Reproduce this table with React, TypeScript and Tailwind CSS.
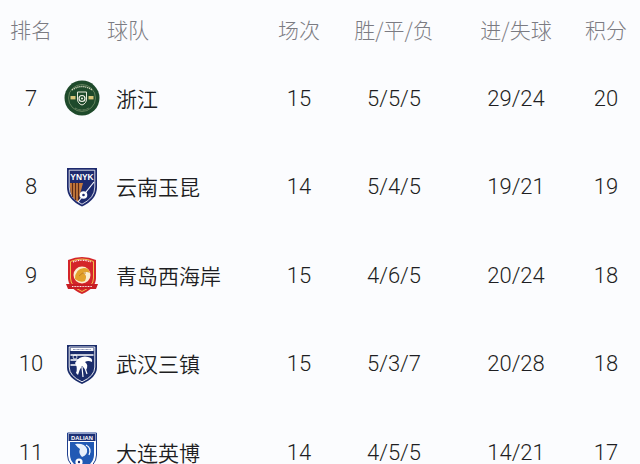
import React from "react";

const font = { fontFamily: '"Noto Sans CJK SC", "Noto Sans", sans-serif' };
const digitFont = { fontFamily: 'Roboto, "Noto Sans CJK SC", sans-serif' };

function ZhejiangLogo() {
  return (
    <svg width="36" height="36" viewBox="0 0 36 36">
      <circle cx="18" cy="18" r="17.5" fill="#1e4a2b" />
      <circle cx="18" cy="18" r="13.5" fill="none" stroke="#8fa57a" strokeWidth="0.6" />
      <path d="M8 10 Q18 3 28 10" fill="none" stroke="#d9dcc0" strokeWidth="1.4" strokeDasharray="1.2 0.8" />
      <path d="M11 28 Q18 32 25 28" fill="none" stroke="#a9b592" strokeWidth="0.8" strokeDasharray="0.8 0.6" />
      <rect x="6.5" y="16" width="5" height="3.4" fill="#d8c57a" />
      <rect x="24.5" y="16" width="5" height="3.4" fill="#d8c57a" />
      <path d="M13.5 12 H22.5 V19 Q22.5 23.5 18 25 Q13.5 23.5 13.5 19 Z" fill="none" stroke="#e8eadb" strokeWidth="1" />
      <circle cx="18" cy="18.5" r="3" fill="none" stroke="#f2f2e8" strokeWidth="1.2" />
      <circle cx="18" cy="18.5" r="1" fill="#f2f2e8" />
    </svg>
  );
}

function YunnanLogo() {
  return (
    <svg width="32" height="40" viewBox="0 0 32 40">
      <path d="M1 1 H31 V20 Q31 32.5 16 39.5 Q1 32.5 1 20 Z" fill="#1d2a6e" />
      <path d="M3.2 3.2 H28.8 V20 Q28.8 31 16 37.2 Q3.2 31 3.2 20 Z" fill="none" stroke="#ffffff" strokeWidth="0.8" />
      <text x="16" y="13" textAnchor="middle" fontSize="8.4" fontWeight="bold" fill="#ffffff" fontFamily="Liberation Sans, sans-serif">YNYK</text>
      <path d="M4 16 H17 L12 35 Q4 30 4 20 Z" fill="#c67a3e" />
      <path d="M6.5 16 V30" stroke="#5a2a1a" strokeWidth="1.2" />
      <path d="M9.5 16 V33" stroke="#5a2a1a" strokeWidth="1.2" />
      <path d="M12.5 16 V33" stroke="#5a2a1a" strokeWidth="1.2" />
      <path d="M28 15 L12 35" stroke="#ffffff" strokeWidth="1.2" />
      <circle cx="17.5" cy="28" r="3.8" fill="#ffffff" />
      <circle cx="17.5" cy="28" r="1.3" fill="#1d2a6e" />
    </svg>
  );
}

function QingdaoLogo() {
  return (
    <svg width="34" height="42" viewBox="0 0 34 42">
      <path d="M3 6 Q17 0 31 6 V24 Q31 34 17 40 Q3 34 3 24 Z" fill="#d4252a" />
      <path d="M5.5 7.5 Q17 2.5 28.5 7.5 V24 Q28.5 32.5 17 37.5 Q5.5 32.5 5.5 24 Z" fill="none" stroke="#f2c14b" strokeWidth="1" />
      <path d="M8 8 Q17 4.5 26 8" fill="none" stroke="#ffffff" strokeWidth="1.2" strokeDasharray="1 0.7" />
      <circle cx="17" cy="21" r="8.5" fill="#fbeed0" />
      <path d="M10 25 Q10 15 19 14 Q24 14 25 19 Q21 17 18 19 Q23 21 20 27 Q15 29 10 25 Z" fill="#e3a22c" />
      <path d="M14 22 Q17 18 21 19" fill="none" stroke="#b8741a" strokeWidth="0.8" />
      <path d="M1 30 H33 L31 35 H3 Z" fill="#c81e24" />
      <path d="M7 32.5 H27" stroke="#ffffff" strokeWidth="0.9" strokeDasharray="1 0.6" />
    </svg>
  );
}

function WuhanLogo() {
  return (
    <svg width="32" height="42" viewBox="0 0 32 42">
      <path d="M1 2 H31 V24 Q31 34.5 16 41 Q1 34.5 1 24 Z" fill="#1b2d6b" />
      <path d="M3.2 4 H28.8 V24 Q28.8 33 16 38.8 Q3.2 33 3.2 24 Z" fill="none" stroke="#ffffff" strokeWidth="0.9" />
      <rect x="4.5" y="5" width="23" height="3" fill="#ffffff" />
      <path d="M7 6.5 H25" stroke="#1b2d6b" strokeWidth="0.6" strokeDasharray="0.8 0.5" />
      <path d="M4.5 12 H27.5 M4.5 17 H14 M4.5 22 H11" stroke="#ffffff" strokeWidth="1.6" />
      <circle cx="9" cy="14" r="2" fill="none" stroke="#ffffff" strokeWidth="0.8" />
      <path d="M9 20 Q14 12 22 14 Q27 15 26 19 Q22 17 19 19 Q23 22 20 27 L16 23 Q13 27 12 32 L10 30 Q12 25 9 20 Z" fill="#ffffff" />
      <path d="M16 24 L17 34 M19 25 L21 31" stroke="#ffffff" strokeWidth="1.2" />
    </svg>
  );
}

function DalianLogo() {
  return (
    <svg width="32" height="42" viewBox="0 0 32 42">
      <path d="M1.5 2 H30.5 V24 Q30.5 34.5 16 41 Q1.5 34.5 1.5 24 Z" fill="#ffffff" stroke="#1e3f8f" strokeWidth="1" />
      <rect x="2.5" y="3" width="27" height="7" fill="#1b2f74" />
      <text x="16" y="8.8" textAnchor="middle" fontSize="5.8" fontWeight="bold" fill="#ffffff" fontFamily="Liberation Sans, sans-serif">DALIAN</text>
      <path d="M4 11 H28 V24 Q28 32.5 16 38.6 Q4 32.5 4 24 Z" fill="#2159b4" />
      <path d="M9 13 Q19 12 21 18 Q22 24 16 26 Q12 22 14 18 Q11 16 9 13 Z" fill="#e8f0fb" />
      <path d="M20 14 Q26 17 23 24" fill="none" stroke="#ffffff" strokeWidth="1.2" />
      <circle cx="13" cy="31" r="3.6" fill="#ffffff" />
      <circle cx="13" cy="31" r="1.2" fill="#1b2f74" />
    </svg>
  );
}

const rows = [
  { rank: "7", name: "浙江", logo: <ZhejiangLogo />, played: "15", wdl: "5/5/5", goals: "29/24", pts: "20" },
  { rank: "8", name: "云南玉昆", logo: <YunnanLogo />, played: "14", wdl: "5/4/5", goals: "19/21", pts: "19" },
  { rank: "9", name: "青岛西海岸", logo: <QingdaoLogo />, played: "15", wdl: "4/6/5", goals: "20/24", pts: "18" },
  { rank: "10", name: "武汉三镇", logo: <WuhanLogo />, played: "15", wdl: "5/3/7", goals: "20/28", pts: "18" },
  { rank: "11", name: "大连英博", logo: <DalianLogo />, played: "14", wdl: "4/5/5", goals: "14/21", pts: "17" },
];

const grid = "grid grid-cols-[62px_188px_98px_92px_152px_28px] items-center";

export default function App() {
  return (
    <div className="w-[640px] h-[464px] overflow-hidden bg-[#fbfcfe]" style={font}>
      <div className={`${grid} h-[54px] pt-[6px] text-[21px] text-[#7b7b82] font-light`}>
        <div className="flex justify-center whitespace-nowrap">排名</div>
        <div className="pl-[45px] whitespace-nowrap">球队</div>
        <div className="flex justify-center whitespace-nowrap">场次</div>
        <div className="flex justify-center whitespace-nowrap">胜/平/负</div>
        <div className="flex justify-center whitespace-nowrap">进/失球</div>
        <div className="flex justify-center whitespace-nowrap">积分</div>
      </div>
      {rows.map((r) => (
        <div key={r.rank} className={`${grid} h-[88.5px] text-[21px] text-[#1e1e22] font-[350]`}>
          <div className="flex justify-center text-[22px]" style={digitFont}>{r.rank}</div>
          <div className="flex items-center">
            <div className="w-[40px] h-[44px] flex items-center justify-center">{r.logo}</div>
            <div className="ml-[14px] whitespace-nowrap">{r.name}</div>
          </div>
          <div className="flex justify-center text-[22px]" style={digitFont}>{r.played}</div>
          <div className="flex justify-center text-[22px]" style={digitFont}>{r.wdl}</div>
          <div className="flex justify-center text-[22px]" style={digitFont}>{r.goals}</div>
          <div className="flex justify-center text-[22px]" style={digitFont}>{r.pts}</div>
        </div>
      ))}
    </div>
  );
}
